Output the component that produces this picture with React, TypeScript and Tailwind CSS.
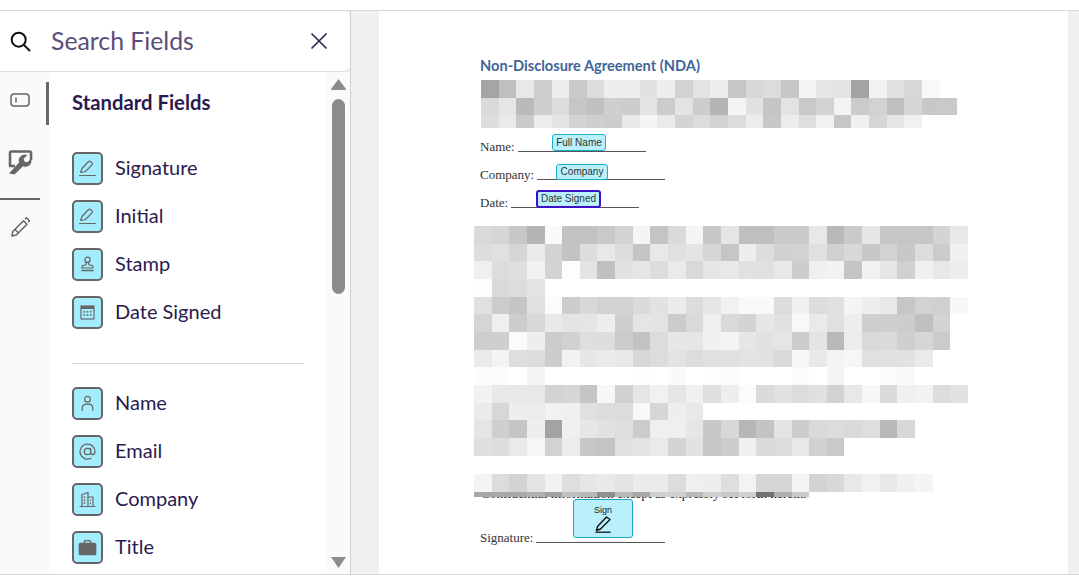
import React from "react";

const block1 = [
  "a5 bf e8 cf ee c9 dd ee ee e1 ee d2 e3 ee c6 d8 dc c7 f5 e6 e4 a3 f2 e2 d8 f8",
  "da e6 ba cf dc c6 c1 cf cc e3 cc e3 cd b5 f4 e2 c5 e3 c9 d2 f3 cb d2 bf d6 c8 c9",
  "dd ea ca ec e4 d4 cf cd e9 f5 ea d4 dc d2 dc ec c8 ec de f1 c6 f0 d5 e5 f1",
];
const block2 = [
  "d9 d6 c8 b5 fa c2 c2 c9 d4 f5 c4 da f5 c8 e5 bf bf ca ca e8 b9 ca e6 c6 c6 c6 d4 e8",
  "dd e0 d5 ea d3 c3 dd e8 dc c5 e8 e0 e4 d6 c6 ee dd d1 d3 e0 d0 d8 c8 d2 c8 dd cb f0",
  "ef dc df f2 d3 fd e4 c0 e2 e6 dc ea d9 e5 e8 e1 e0 e8 cd f0 f2 c5 f1 e6 d0 f0 e8 ed",
  "fd d9 dc e3",
  "e0 cc c5 e0 fb cd d8 d2 d2 da e2 eb dc e6 f1 f9 f9 dc f0 dc e0 f4 ee e8 c6 d2 d0 f7",
  "d5 ef cd d8 e9 e4 e5 ee cf e5 e3 cc d9 ef d9 d4 e6 e1 f8 ea e0 ed cf cf cd c0 d3",
  "ce cf fb ee cc d1 de dd cb c2 dc e7 e6 f0 f4 e6 e2 e5 cc e4 b9 ec d9 da cf d6 cb",
  "ea f4 de dd cd f2 e6 ea e8 d7 dc e3 dc e1 e1 e3 e2 d9 f7 e9 f4 f6 e0 e0 e2 ea",
  "fc fb ff f3 ff ff ff ff ff fd ff fa ff fe fb ff ff ff fb ff f4 ff ff fb f9",
  "f2 e8 e8 e8 d3 d6 c5 f7 d1 e5 f1 e5 f0 df ee fc db e1 dc e0 d2 e8 f7 da f0 f2 dd e2",
  "eb d7 ee ec f2 f0 e0 dc dc f8 d6 ee e9",
  "e5 cf c5 ee a3 f0 e7 e2 de cb ef ef e6 c8 d8 b6 c3 e3 cd d9 dc da de b8 d8",
  "df dd ea f6 d2 ec c7 c4 e0 e3 ea d3 e2 c7 cc f0 da dc e8 d1 c9",
];
const block3 = ["f4 dc d3 e4 f2 de e6 e9 e3 eb eb dc ef ed de f3 d6 d6 f4 d3 d8 e8 f1 e8 f0 f5"];
const strip = "a8 a8 a8 b0 a0 c0 b8 90 b8 a8 d0 d0 b8 d0 c8 d0 70 b0 c8";

function Pixels({ rows, h }: { rows: string[]; h?: number[] }) {
  return (
    <div className="flex flex-col">
      {rows.map((r, i) => (
        <div key={i} className="flex" style={{ height: h ? h[i] : 17.67 }}>
          {r.split(" ").map((c, j) => (
            <div key={j} className="w-[17.65px] shrink-0" style={{ backgroundColor: "#" + c + c + c }} />
          ))}
        </div>
      ))}
    </div>
  );
}

const S = { fill: "none", stroke: "#666", strokeWidth: 1.2, strokeLinecap: "round", strokeLinejoin: "round" } as const;

const PenIcon = () => (
  <svg width="19" height="19" viewBox="0 0 19 19" {...S}>
    <path d="M2.5 13.5 L4 9.5 L10.5 2.5 Q11.5 1.8 12.5 2.5 L14 3.8 Q14.7 4.8 14 5.8 L7.5 12.5 Z" />
    <path d="M1.5 16.5 H17.5" />
  </svg>
);
const StampIcon = () => (
  <svg width="19" height="19" viewBox="0 0 19 19" {...S}>
    <circle cx="9.5" cy="4.8" r="2.6" />
    <path d="M8.3 7.2 V9 Q8.3 10 6.5 10.2 Q4 10.3 4 12 V13 H15 V12 Q15 10.3 12.5 10.2 Q10.7 10 10.7 9 V7.2" />
    <path d="M4 15.5 H15" strokeWidth="1.6" />
  </svg>
);
const CalIcon = () => (
  <svg width="19" height="19" viewBox="0 0 19 19">
    <rect x="3" y="3" width="13" height="13" fill="none" stroke="#666" strokeWidth="1.2" />
    <rect x="3" y="3" width="13" height="3" fill="#666" />
    <g fill="#666">
      <rect x="5.5" y="8" width="1.6" height="1.6" /><rect x="8.7" y="8" width="1.6" height="1.6" /><rect x="11.9" y="8" width="1.6" height="1.6" />
      <rect x="5.5" y="11.2" width="1.6" height="1.6" /><rect x="8.7" y="11.2" width="1.6" height="1.6" /><rect x="11.9" y="11.2" width="1.6" height="1.6" />
    </g>
  </svg>
);
const UserIcon = () => (
  <svg width="19" height="19" viewBox="0 0 19 19" {...S}>
    <circle cx="9.5" cy="5.2" r="2.9" />
    <path d="M4.2 16.5 V14 Q4.2 10.2 9.5 10.2 Q14.8 10.2 14.8 14 V16.5" />
  </svg>
);
const AtIcon = () => (
  <svg width="19" height="19" viewBox="0 0 19 19" {...S} strokeWidth="1.3">
    <circle cx="9.5" cy="9.5" r="3.2" />
    <path d="M12.7 6.3 V10.5 Q12.7 12.5 14.5 12.5 Q17 12.5 17 9.5 A7.5 7.5 0 1 0 13 16.2" />
  </svg>
);
const BuildingIcon = () => (
  <svg width="19" height="19" viewBox="0 0 19 19" {...S}>
    <path d="M4 16 V4.5 L10 2.5 V16" />
    <path d="M10 7 H15 V16" />
    <path d="M2 16.5 H17" />
    <path d="M6.5 7 V7.6 M6.5 10 V10.6 M6.5 13 V13.6" strokeWidth="1.5" />
    <path d="M12.5 10 V10.6 M12.5 13 V13.6" strokeWidth="1.2" />
  </svg>
);
const CaseIcon = () => (
  <svg width="19" height="19" viewBox="0 0 19 19">
    <path d="M6.5 5 V3.6 Q6.5 2.6 7.6 2.6 H11.4 Q12.5 2.6 12.5 3.6 V5" fill="none" stroke="#666" strokeWidth="1.4" />
    <rect x="0.7" y="4.7" width="17.6" height="12.6" rx="1.6" fill="#666" />
  </svg>
);

const standard: [string, React.ReactNode][] = [
  ["Signature", <PenIcon />],
  ["Initial", <PenIcon />],
  ["Stamp", <StampIcon />],
  ["Date Signed", <CalIcon />],
];
const other: [string, React.ReactNode][] = [
  ["Name", <UserIcon />],
  ["Email", <AtIcon />],
  ["Company", <BuildingIcon />],
  ["Title", <CaseIcon />],
];

function FieldRow({ label, icon }: { label: string; icon: React.ReactNode }) {
  return (
    <div className="flex items-center gap-[12px] h-[33px]">
      <div className="w-[31px] h-[33px] box-border border-2 border-[#666] rounded-[5px] bg-[#a5ecff] flex items-center justify-center">
        {icon}
      </div>
      <span className="text-[20px] leading-none text-[#2b1a4e] -mt-[3px]">{label}</span>
    </div>
  );
}

function DocLine({ label, w }: { label: string; w: string }) {
  return (
    <div className="flex items-end h-[20px] text-[13px] text-[#333] font-['Liberation_Serif',serif] ml-[6px] leading-none">
      <span className="pb-[3px]">{label}</span>
      <span className={`${w} ml-[3px] border-b border-[#555] mb-[4px]`} />
    </div>
  );
}

function Tag({ cls, children }: { cls: string; children: React.ReactNode }) {
  return (
    <div className={`absolute z-20 box-border flex items-center justify-center rounded-[3px] bg-[#b9f0fb] leading-none text-[#333] font-['Liberation_Sans',sans-serif] ${cls}`}>
      {children}
    </div>
  );
}

export default function App() {
  return (
    <div className="w-[1079px] h-[583px] overflow-hidden bg-white flex flex-col font-['Lato',sans-serif]">
      <div className="h-[10px] shrink-0" />
      <div className="h-[565px] shrink-0 flex border-y border-[#d9d9d9] box-border">
        {/* sidebar */}
        <aside className="w-[351px] shrink-0 flex flex-col border-r border-[#cfcfcf] bg-[#efefef]">
          <div className="h-[61px] shrink-0 flex items-center bg-white border-b border-[#dcdcdc] rounded-r-[6px]">
            <svg className="ml-[10px]" width="21" height="21" viewBox="0 0 21 21" fill="none" stroke="#111" strokeWidth="2" strokeLinecap="round">
              <circle cx="8.7" cy="8.7" r="7" />
              <path d="M14 14 L19.5 19.5" />
            </svg>
            <span className="ml-[20px] mt-[1px] text-[24.8px] leading-none text-[#5b4d78]">Search Fields</span>
            <svg className="ml-auto mr-[22px]" width="18" height="18" viewBox="0 0 18 18" fill="none" stroke="#352657" strokeWidth="1.7">
              <path d="M1.5 1.5 L16.5 16.5 M16.5 1.5 L1.5 16.5" />
            </svg>
          </div>
          <div className="flex-1 flex min-h-0">
            {/* rail */}
            <div className="w-[49px] shrink-0 bg-[#fafafa] relative flex flex-col">
              <div className="absolute right-0 top-[10px] w-[3px] h-[43px] bg-[#666]" />
              <div className="h-[58px] flex pl-[10px] pt-[21px]">
                <svg width="20" height="14" viewBox="0 0 20 14" fill="none" stroke="#666" strokeWidth="1.5">
                  <rect x="1" y="1" width="18" height="12" rx="3" />
                  <path d="M6 4.5 V9.5" />
                </svg>
              </div>
              <div className="h-[68px] pl-[8px] pt-[20px]">
                <svg width="25" height="25" viewBox="0 0 25 25">
                  <path d="M2 16 V3 Q2 1.5 3.5 1.5 H21.5 Q23 1.5 23 3 V10" fill="none" stroke="#666" strokeWidth="2.6" />
                  <path d="M1 16 H7" stroke="#666" strokeWidth="2.6" />
                  <path d="M1 23.5 L11 12.5 Q9.5 7.5 14.5 5 Q17 4.2 19.5 5 L15.5 8.8 L16.5 11.5 L19.3 12.3 L23.5 8.5 Q24 14 20.5 16 Q17.5 17.5 15 16.3 L6.5 24.5 Z" fill="#666" />
                </svg>
              </div>
              <div className="w-[40px] h-[2px] bg-[#666] shrink-0" />
              <div className="pl-[11px] pt-[17px]">
                <svg width="19" height="20" viewBox="0 0 19 20" fill="none" stroke="#666" strokeWidth="1.5" strokeLinejoin="round">
                  <path d="M1 19 L1.8 14.5 L12.5 3.8 L16 7.3 L5.3 18 Z" />
                  <path d="M4 12.5 L7.5 16" />
                  <path d="M14 2.2 L15.5 0.8 L18.5 3.8 L17.2 5.2" />
                </svg>
              </div>
            </div>
            {/* list */}
            <div className="flex-1 bg-white pl-[23px] pr-[23px] overflow-hidden">
              <h2 className="mt-[19px] h-[22px] text-[20.3px] leading-[22px] font-bold text-[#2b1a4e] whitespace-nowrap">Standard Fields</h2>
              <div className="mt-[39px] flex flex-col gap-[15px]">
                {standard.map(([l, i]) => <FieldRow key={l} label={l} icon={i} />)}
              </div>
              <div className="mt-[34px] mb-[23px] h-px bg-[#d9d9d9]" />
              <div className="flex flex-col gap-[15px]">
                {other.map(([l, i]) => <FieldRow key={l} label={l} icon={i} />)}
              </div>
            </div>
            {/* scrollbar */}
            <div className="w-[23px] shrink-0 bg-[#fafafa] flex flex-col items-center">
              <svg className="mt-[7px]" width="15" height="11" viewBox="0 0 15 11"><path d="M7.5 0 L15 10 Q15 11 14 11 H1 Q0 11 0 10 Z" fill="#8c8c8c" /></svg>
              <div className="mt-[9px] w-[13px] h-[195px] rounded-full bg-[#8c8c8c]" />
              <svg className="mt-auto mb-[6px]" width="15" height="11" viewBox="0 0 15 11"><path d="M0 0 H15 L7.5 11 Z" fill="#8c8c8c" /></svg>
            </div>
          </div>
        </aside>
        <div className="w-[28px] shrink-0 bg-[#f0f0f0]" />
        {/* page */}
        <main className="w-[689px] shrink-0 relative pl-[95px] bg-white overflow-hidden">
          <h1 className="ml-[6px] mt-[45px] h-[20px] leading-[20px] text-[14.6px] font-bold text-[#3f6599] whitespace-nowrap">Non-Disclosure Agreement (NDA)</h1>
          <div className="ml-[7px] mt-[4px]"><Pixels rows={block1} h={[18, 17, 13]} /></div>
          <div className="mt-[8px]"><DocLine label="Name:" w="w-[128px]" /></div>
          <div className="mt-[8px]"><DocLine label="Company:" w="w-[128px]" /></div>
          <div className="mt-[8px]"><DocLine label="Date:" w="w-[128px]" /></div>
          <div className="mt-[14px]"><Pixels rows={block2} /></div>
          <div className="mt-[18px] relative z-10"><Pixels rows={block3} h={[18]} /></div>
          <div className="relative z-10"><Pixels rows={[strip]} h={[5]} /></div>
          <p className="ml-[7px] -mt-[9px] h-[12px] text-[13.3px] leading-[12px] text-[#222] whitespace-nowrap font-['Liberation_Serif',serif]">Confidential information except as expressly set forth herein.</p>
          <div className="mt-[27px]"><DocLine label="Signature:" w="w-[129px]" /></div>

          <Tag cls="left-[173px] top-[123px] w-[54px] h-[17px] border border-[#1ab0cc] text-[10px]">Full Name</Tag>
          <Tag cls="left-[177px] top-[153px] w-[52px] h-[16px] border border-[#1ab0cc] text-[10px]">Company</Tag>
          <Tag cls="left-[157px] top-[179px] w-[65px] h-[18px] border-2 border-[#3c10c8] text-[10px] text-[#1e2a55]">Date Signed</Tag>
          <Tag cls="left-[194px] top-[488px] w-[60px] h-[39px] border border-[#1aa6c4] flex-col justify-start pt-[6px] text-[9px]">
            <span className="text-[#222]">Sign</span>
            <svg className="mt-[1px]" width="16" height="17" viewBox="0 0 16 17" fill="none" stroke="#111" strokeWidth="1.4" strokeLinejoin="round">
              <path d="M1.5 14.5 L2.5 10.5 L11.5 1 L15 3.5 L5.5 13 Z" />
              <path d="M0.5 16.2 H15.5" strokeWidth="1.3" />
            </svg>
          </Tag>
        </main>
        <div className="flex-1 bg-[#f0f0f0]" />
      </div>
    </div>
  );
}
